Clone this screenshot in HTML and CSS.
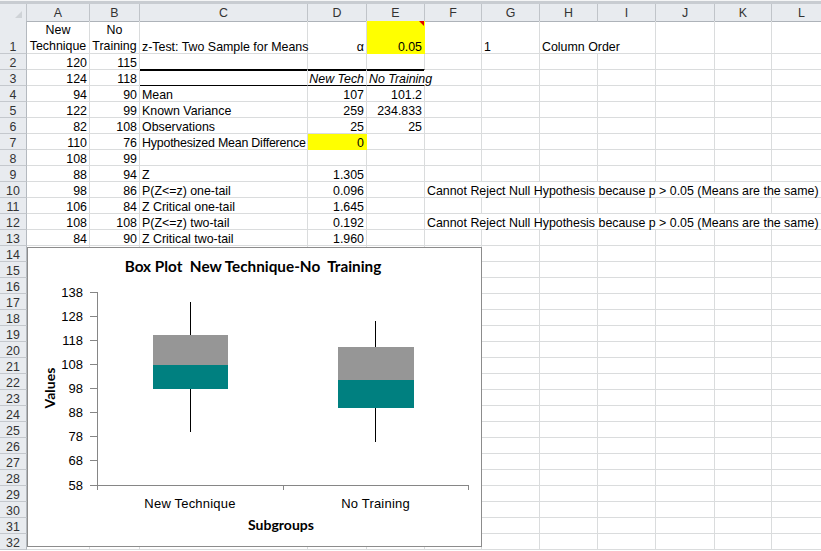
FILE: index.html
```
<!DOCTYPE html>
<html>
<head>
<meta charset="utf-8">
<link rel="stylesheet" href="styles.css">
</head>
<body>
<div class="sheet">
  <div class="topbar"></div>
  <div class="row hdr"><span class="corner"></span><span>A</span><span>B</span><span>C</span><span>D</span><span>E</span><span>F</span><span>G</span><span>H</span><span>I</span><span>J</span><span>K</span><span>L</span></div>
  <div class="row tall"><span class="rh">1</span><span class="c wrap"><span class="wl">New Technique</span></span><span class="c wrap"><span class="wl">No Training</span></span><span class="t">z-Test: Two Sample for Means</span><span class="n">α</span><span class="n y note">0.05</span><span></span><span class="t">1</span><span class="t span2">Column Order</span><span></span><span></span><span></span></div>
  <div class="row"><span class="rh">2</span><span class="n">120</span><span class="n">115</span><span class="bb"></span><span class="bb"></span><span class="bb"></span><span></span><span></span><span></span><span></span><span></span><span></span><span></span></div>
  <div class="row"><span class="rh">3</span><span class="n">124</span><span class="n">118</span><span class="tb"></span><span class="n it tb">New Tech</span><span class="t it tb over">No Training</span><span></span><span></span><span></span><span></span><span></span><span></span><span></span></div>
  <div class="row"><span class="rh">4</span><span class="n">94</span><span class="n">90</span><span class="t">Mean</span><span class="n">107</span><span class="n">101.2</span><span></span><span></span><span></span><span></span><span></span><span></span><span></span></div>
  <div class="row"><span class="rh">5</span><span class="n">122</span><span class="n">99</span><span class="t">Known Variance</span><span class="n">259</span><span class="n">234.833</span><span></span><span></span><span></span><span></span><span></span><span></span><span></span></div>
  <div class="row"><span class="rh">6</span><span class="n">82</span><span class="n">108</span><span class="t">Observations</span><span class="n">25</span><span class="n">25</span><span></span><span></span><span></span><span></span><span></span><span></span><span></span></div>
  <div class="row"><span class="rh">7</span><span class="n">110</span><span class="n">76</span><span class="t tight">Hypothesized Mean Difference</span><span class="n y">0</span><span></span><span></span><span></span><span></span><span></span><span></span><span></span><span></span></div>
  <div class="row"><span class="rh">8</span><span class="n">108</span><span class="n">99</span><span></span><span></span><span></span><span></span><span></span><span></span><span></span><span></span><span></span><span></span></div>
  <div class="row"><span class="rh">9</span><span class="n">88</span><span class="n">94</span><span class="t">Z</span><span class="n">1.305</span><span></span><span></span><span></span><span></span><span></span><span></span><span></span><span></span></div>
  <div class="row"><span class="rh">10</span><span class="n">98</span><span class="n">86</span><span class="t">P(Z&lt;=z) one-tail</span><span class="n">0.096</span><span></span><span class="t span7">Cannot Reject Null Hypothesis because p &gt; 0.05 (Means are the same)</span></div>
  <div class="row"><span class="rh">11</span><span class="n">106</span><span class="n">84</span><span class="t">Z Critical one-tail</span><span class="n">1.645</span><span></span><span></span><span></span><span></span><span></span><span></span><span></span><span></span></div>
  <div class="row"><span class="rh">12</span><span class="n">108</span><span class="n">108</span><span class="t">P(Z&lt;=z) two-tail</span><span class="n">0.192</span><span></span><span class="t span7">Cannot Reject Null Hypothesis because p &gt; 0.05 (Means are the same)</span></div>
  <div class="row"><span class="rh">13</span><span class="n">84</span><span class="n">90</span><span class="t">Z Critical two-tail</span><span class="n">1.960</span><span></span><span></span><span></span><span></span><span></span><span></span><span></span><span></span></div>
  <div class="row"><span class="rh">14</span><span></span><span></span><span></span><span></span><span></span><span></span><span></span><span></span><span></span><span></span><span></span><span></span></div>
  <div class="row"><span class="rh">15</span><span></span><span></span><span></span><span></span><span></span><span></span><span></span><span></span><span></span><span></span><span></span><span></span></div>
  <div class="row"><span class="rh">16</span><span></span><span></span><span></span><span></span><span></span><span></span><span></span><span></span><span></span><span></span><span></span><span></span></div>
  <div class="row"><span class="rh">17</span><span></span><span></span><span></span><span></span><span></span><span></span><span></span><span></span><span></span><span></span><span></span><span></span></div>
  <div class="row"><span class="rh">18</span><span></span><span></span><span></span><span></span><span></span><span></span><span></span><span></span><span></span><span></span><span></span><span></span></div>
  <div class="row"><span class="rh">19</span><span></span><span></span><span></span><span></span><span></span><span></span><span></span><span></span><span></span><span></span><span></span><span></span></div>
  <div class="row"><span class="rh">20</span><span></span><span></span><span></span><span></span><span></span><span></span><span></span><span></span><span></span><span></span><span></span><span></span></div>
  <div class="row"><span class="rh">21</span><span></span><span></span><span></span><span></span><span></span><span></span><span></span><span></span><span></span><span></span><span></span><span></span></div>
  <div class="row"><span class="rh">22</span><span></span><span></span><span></span><span></span><span></span><span></span><span></span><span></span><span></span><span></span><span></span><span></span></div>
  <div class="row"><span class="rh">23</span><span></span><span></span><span></span><span></span><span></span><span></span><span></span><span></span><span></span><span></span><span></span><span></span></div>
  <div class="row"><span class="rh">24</span><span></span><span></span><span></span><span></span><span></span><span></span><span></span><span></span><span></span><span></span><span></span><span></span></div>
  <div class="row"><span class="rh">25</span><span></span><span></span><span></span><span></span><span></span><span></span><span></span><span></span><span></span><span></span><span></span><span></span></div>
  <div class="row"><span class="rh">26</span><span></span><span></span><span></span><span></span><span></span><span></span><span></span><span></span><span></span><span></span><span></span><span></span></div>
  <div class="row"><span class="rh">27</span><span></span><span></span><span></span><span></span><span></span><span></span><span></span><span></span><span></span><span></span><span></span><span></span></div>
  <div class="row"><span class="rh">28</span><span></span><span></span><span></span><span></span><span></span><span></span><span></span><span></span><span></span><span></span><span></span><span></span></div>
  <div class="row"><span class="rh">29</span><span></span><span></span><span></span><span></span><span></span><span></span><span></span><span></span><span></span><span></span><span></span><span></span></div>
  <div class="row"><span class="rh">30</span><span></span><span></span><span></span><span></span><span></span><span></span><span></span><span></span><span></span><span></span><span></span><span></span></div>
  <div class="row"><span class="rh">31</span><span></span><span></span><span></span><span></span><span></span><span></span><span></span><span></span><span></span><span></span><span></span><span></span></div>
  <div class="row"><span class="rh">32</span><span></span><span></span><span></span><span></span><span></span><span></span><span></span><span></span><span></span><span></span><span></span><span></span></div>

  <div class="chart">
    <svg width="455" height="300" viewBox="0 0 455 300">
      <rect x="0.5" y="0.5" width="454" height="299" fill="#fff" stroke="#8c8c8c"/>
      <text class="ctitle" x="226" y="25" text-anchor="middle">Box Plot  New Technique-No  Training</text>
      <g stroke="#868686" stroke-width="1" fill="none">
        <line x1="70.5" y1="45" x2="70.5" y2="243"/>
        <line x1="70" y1="238.5" x2="441" y2="238.5"/>
        <line x1="63" y1="45.5" x2="70" y2="45.5"/>
        <line x1="63" y1="69.5" x2="70" y2="69.5"/>
        <line x1="63" y1="93.5" x2="70" y2="93.5"/>
        <line x1="63" y1="117.5" x2="70" y2="117.5"/>
        <line x1="63" y1="141.5" x2="70" y2="141.5"/>
        <line x1="63" y1="165.5" x2="70" y2="165.5"/>
        <line x1="63" y1="189.5" x2="70" y2="189.5"/>
        <line x1="63" y1="213.5" x2="70" y2="213.5"/>
        <line x1="63" y1="238.5" x2="70" y2="238.5"/>
        <line x1="256.5" y1="238" x2="256.5" y2="243"/>
        <line x1="441.5" y1="238" x2="441.5" y2="243"/>
      </g>
      <g class="ylab" text-anchor="end">
        <text x="56" y="50">138</text>
        <text x="56" y="74">128</text>
        <text x="56" y="98">118</text>
        <text x="56" y="122">108</text>
        <text x="56" y="146">98</text>
        <text x="56" y="170">88</text>
        <text x="56" y="194">78</text>
        <text x="56" y="218">68</text>
        <text x="56" y="243">58</text>
      </g>
      <g stroke="#000" stroke-width="1">
        <line x1="163.5" y1="55" x2="163.5" y2="88"/>
        <line x1="163.5" y1="142" x2="163.5" y2="185"/>
        <line x1="348.5" y1="74" x2="348.5" y2="100"/>
        <line x1="348.5" y1="161" x2="348.5" y2="195"/>
      </g>
      <rect x="126" y="88" width="75" height="30" fill="#969696"/>
      <rect x="126" y="118" width="75" height="24" fill="#008080"/>
      <rect x="311" y="100" width="76" height="33" fill="#969696"/>
      <rect x="311" y="133" width="76" height="28" fill="#008080"/>
      <text class="xlab" x="163" y="261" text-anchor="middle">New Technique</text>
      <text class="xlab" x="348.5" y="261" text-anchor="middle">No Training</text>
      <text class="atitle" x="254" y="283" text-anchor="middle">Subgroups</text>
      <text class="atitle" transform="translate(28,141) rotate(-90)" text-anchor="middle">Values</text>
    </svg>
  </div>
</div>
</body>
</html>
```
FILE: styles.css
```
html, body {
  margin: 0;
  padding: 0;
  background: #fff;
}
body {
  font-family: "Liberation Sans", Arial, sans-serif;
  font-size: 12.4px;
  color: #000;
}
.sheet {
  position: relative;
  width: 821px;
  height: 551px;
  overflow: hidden;
}
.topbar {
  height: 4px;
  box-sizing: border-box;
  border-top: 1px solid #f4f5f6;
  background: #c8ccd1;
}
.row {
  display: grid;
  grid-template-columns: 27px 63px 50px 168px 59px 58px 57px 58px 58px 58px 59px 57px 60px;
  height: 16px;
}
.row.tall {
  height: 33px;
}
.row > span {
  box-sizing: border-box;
  border-right: 1px solid #dadcdd;
  border-bottom: 1px solid #dadcdd;
  display: flex;
  align-items: flex-end;
  white-space: nowrap;
  line-height: 11px;
  padding: 0 2px 0 3px;
  position: relative;
  min-width: 0;
}
.row > span.t {
  padding-left: 2px;
}
.row > span.tight {
  letter-spacing: -0.2px;
}
.row > span.n {
  justify-content: flex-end;
  padding: 0 2px 0 0;
}
.row > span.c {
  justify-content: center;
  text-align: center;
  padding: 0 1px;
}
.row > span.wrap {
  white-space: normal;
  line-height: 16px;
}
.wl {
  position: relative;
  top: 1px;
}
.row > span.it {
  font-style: italic;
}
.row > span.y {
  background: #ffff00;
  border-right-color: #ffff00;
  border-bottom-color: #ffff00;
}
.row > span.note::after {
  content: "";
  position: absolute;
  top: 0;
  right: 0;
  border-top: 5px solid #e00000;
  border-left: 5px solid transparent;
}
.row > span.span2 {
  grid-column: span 2;
}
.row > span.span7 {
  grid-column: span 7;
}
.row > span.over {
  border-right-color: transparent;
  overflow: visible;
  z-index: 1;
}
.row > span.bb {
  border-bottom-color: #000;
}
.row > span.tb {
  box-shadow: inset 0 1px 0 #000;
  border-bottom-color: #000;
}
.row > span.rh {
  background: #e8ebef;
  border-right: 1px solid #b4b9bf;
  border-bottom: 1px solid #c4c8cd;
  color: #333;
  justify-content: center;
  padding: 0;
  line-height: 11px;
}
.row.hdr {
  height: 17px;
}
.row.hdr > span {
  background: #e8ebef;
  border-right: 1px solid #c0c4c9;
  border-bottom: 1px solid #aeb3b9;
  color: #333;
  justify-content: center;
  align-items: center;
  padding: 2px 0 0 0;
  line-height: 15px;
}
.row.hdr > span.corner::after {
  content: "";
  position: absolute;
  right: 4px;
  bottom: 3px;
  border-bottom: 7px solid #cfd3d7;
  border-left: 7px solid transparent;
}
.chart {
  position: absolute;
  left: 27px;
  top: 247px;
  width: 455px;
  height: 300px;
}
.chart svg {
  display: block;
}
.ctitle {
  font-family: Lato, "Open Sans", sans-serif;
  font-weight: bold;
  font-size: 15.3px;
  white-space: pre;
  fill: #000;
}
.ylab text {
  font-family: "Liberation Sans", Arial, sans-serif;
  font-size: 13px;
  fill: #000;
}
.xlab {
  font-family: "Liberation Sans", Arial, sans-serif;
  font-size: 13px;
  letter-spacing: 0.2px;
  fill: #000;
}
.atitle {
  font-family: Lato, "Open Sans", sans-serif;
  font-weight: bold;
  font-size: 14px;
  fill: #000;
}
```
